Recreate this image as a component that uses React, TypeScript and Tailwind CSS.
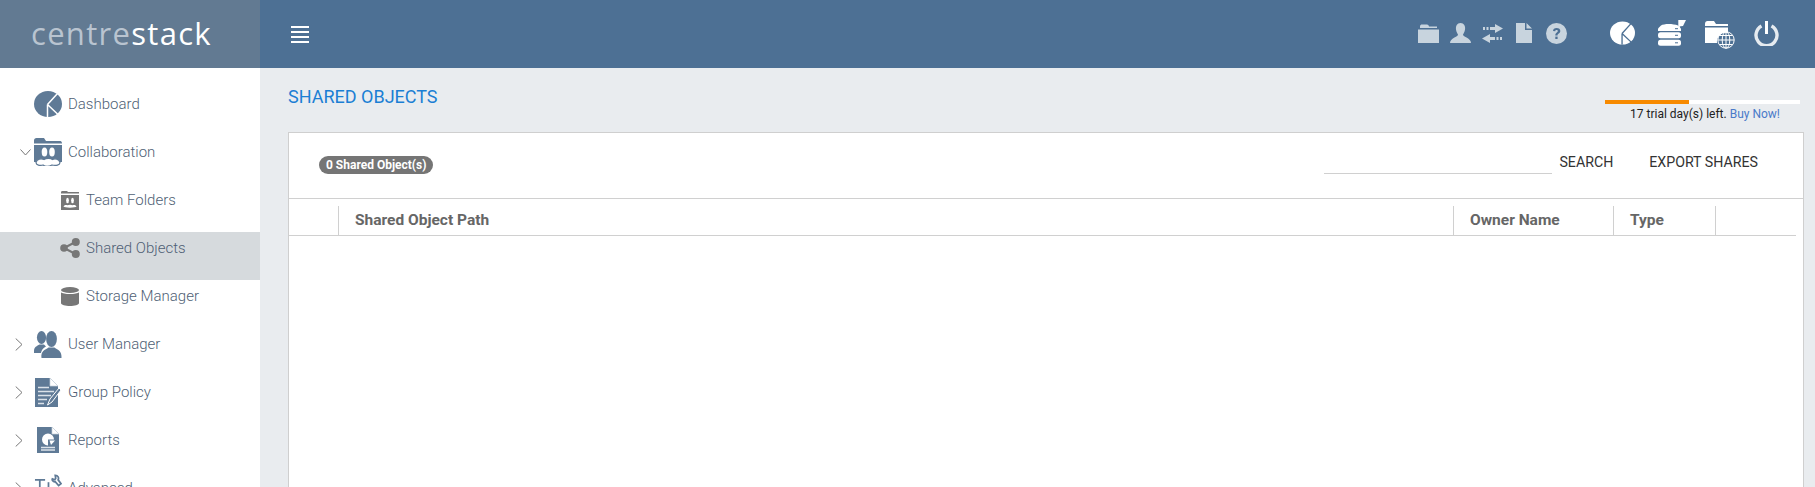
import React from 'react';

const SLATE = '#5f7a96';
const GREY = '#777777';

const PieIcon = ({ color, cut }: { color: string; cut: string }) => (
  <svg viewBox="0 0 28 26" className="w-full h-full">
    <ellipse cx="14" cy="13" rx="14" ry="13" fill={color} />
    <path d="M13.5 13.5L23.5 2.5M13.5 13.5V26M13.5 13.5L24 23.5" stroke={cut} strokeWidth="1.5" fill="none" />
  </svg>
);

const PeopleFolder = ({ color }: { color: string }) => (
  <svg viewBox="0 0 28 28" className="w-[28px] h-[28px]">
    <path d="M0 4V2.5C0 1 1 0 2.5 0H10L12 3H25.5C27 3 28 3.5 28 5.5H0Z" fill={color} />
    <rect x="0" y="7" width="28" height="17" fill={color} />
    <ellipse cx="10.5" cy="14" rx="2.8" ry="4.6" fill="#fff" />
    <ellipse cx="18" cy="14" rx="2.8" ry="4.6" fill="#fff" />
    <path d="M2 24.5C3 21 7 20 10 21.5C12 20 17 20 18.5 21.5C21 20 25 21 26 24.5C26 27 22 28 18 27C15 28.5 11 28.5 9 27C6 28 2 27 2 24.5Z" fill="#fff" stroke={color} strokeWidth="1.2" />
  </svg>
);

const TeamFolder = () => (
  <svg viewBox="0 0 18 19" className="w-[18px] h-[19px]">
    <path d="M0 1.5C0 .5.5 0 1.5 0H6L7 1H18V2.5H0Z" fill={GREY} />
    <rect y="4" width="18" height="15" fill={GREY} />
    <ellipse cx="6.5" cy="9.5" rx="1.4" ry="2.8" fill="#fff" />
    <ellipse cx="11.5" cy="9.5" rx="1.4" ry="2.8" fill="#fff" />
    <path d="M2.5 15.5C3 14 5 13.5 6.5 14.3C8 13.5 10 13.5 11.5 14.3C13 13.5 15 14 15.5 15.5C15 17 3 17 2.5 15.5Z" fill="#fff" />
  </svg>
);

const ShareIcon = () => (
  <svg viewBox="0 0 20 20" className="w-5 h-5">
    <path d="M4 10L15.5 4M4 10L15.5 16" stroke={GREY} strokeWidth="2" fill="none" />
    <circle cx="4" cy="10" r="3.8" fill={GREY} />
    <circle cx="15.8" cy="4" r="4" fill={GREY} />
    <circle cx="15.8" cy="16" r="4" fill={GREY} />
  </svg>
);

const StorageIcon = () => (
  <svg viewBox="0 0 18 19" className="w-[18px] h-[19px]">
    <ellipse cx="9" cy="3" rx="9" ry="3" fill={GREY} />
    <path d="M0 5.2C2 7.6 16 7.6 18 5.2V16C18 20 0 20 0 16Z" fill={GREY} />
  </svg>
);

const UsersIcon = () => (
  <svg viewBox="0 0 28 27" className="w-[28px] h-[27px]">
    <ellipse cx="7.5" cy="6.5" rx="4.6" ry="6.5" fill={SLATE} />
    <path d="M0 20C0 16 3 15 5.5 13.5H10L12 15.5C9 17 7.5 19 7 22H0Z" fill={SLATE} />
    <ellipse cx="17.5" cy="8" rx="5.4" ry="8" fill={SLATE} />
    <path d="M7.5 27C6.5 20 11 19 14.5 16.5H20.5C24 19 28 20 27.5 27Z" fill={SLATE} />
  </svg>
);

const PolicyIcon = () => (
  <svg viewBox="0 0 26 29" className="w-[26px] h-[29px]">
    <path d="M0 0H15L23 8V29H0Z" fill={SLATE} />
    <path d="M15 0L23 8H15Z" fill="#fff" stroke="#c8d2dc" strokeWidth=".7" />
    <path d="M3 9.5H14M3 13.5H19M3 17.5H16M3 21.5H12M3 25.5H9" stroke="#dbe2e9" strokeWidth="1.5" />
    <path d="M12.5 27L15 21L24 10L26 12L17 24Z" fill={SLATE} stroke="#fff" strokeWidth="1" />
  </svg>
);

const ReportIcon = () => (
  <svg viewBox="0 0 22 26" className="w-[22px] h-[26px]">
    <path d="M0 0H15L22 7V26H0Z" fill={SLATE} />
    <path d="M15 0L22 7H15Z" fill="#fff" stroke="#c8d2dc" strokeWidth=".7" />
    <path d="M11 6.5A6 6 0 1 0 11 18.5V12.5H17A6 6 0 0 0 11 6.5Z" fill="#fff" />
    <path d="M12.5 13.5H18L14 18Z" fill="#fff" />
    <path d="M4 20.5H18M4 23H18" stroke="#dbe2e9" strokeWidth="1.3" />
  </svg>
);

const ToolsIcon = () => (
  <svg viewBox="0 0 29 28" className="w-[29px] h-[28px]">
    <path d="M1 5.5H11.5M6 5.5V20" stroke={SLATE} strokeWidth="1.8" fill="none" />
    <path d="M15 8V20" stroke={SLATE} strokeWidth="1.8" fill="none" />
    <path d="M22 1C25 1 26 3.5 25 5.5L28 9.5L25.5 11.5L22 7.5C19.5 8 18.5 5.5 19 4.5L21.5 5.5L22.5 4Z" fill="none" stroke={SLATE} strokeWidth="1.8" />
  </svg>
);

const Chevron = ({ open }: { open?: boolean }) =>
  open ? (
    <svg viewBox="0 0 11 7" className="w-[11px] h-[7px]">
      <path d="M0.5 0.5L5.5 6L10.5 0.5" fill="none" stroke="#777" strokeWidth="1" />
    </svg>
  ) : (
    <svg viewBox="0 0 8 13" className="w-2 h-[13px]">
      <path d="M0.7 0.5L7 6.5L0.7 12.5" fill="none" stroke="#777" strokeWidth="1" />
    </svg>
  );

type NavItem = {
  label: string;
  icon: React.ReactNode;
  caret?: 'open' | 'closed';
  sub?: boolean;
  active?: boolean;
};

const items: NavItem[] = [
  { label: 'Dashboard', icon: <div className="w-[28px] h-[26px]"><PieIcon color={SLATE} cut="#fff" /></div> },
  { label: 'Collaboration', icon: <PeopleFolder color={SLATE} />, caret: 'open' },
  { label: 'Team Folders', icon: <TeamFolder />, sub: true },
  { label: 'Shared Objects', icon: <ShareIcon />, sub: true, active: true },
  { label: 'Storage Manager', icon: <StorageIcon />, sub: true },
  { label: 'User Manager', icon: <UsersIcon />, caret: 'closed' },
  { label: 'Group Policy', icon: <PolicyIcon />, caret: 'closed' },
  { label: 'Reports', icon: <ReportIcon />, caret: 'closed' },
  { label: 'Advanced', icon: <ToolsIcon />, caret: 'closed' },
];

const NavRow = ({ item }: { item: NavItem }) => (
  <div className={`h-12 shrink-0 flex items-start ${item.active ? 'bg-[#d6dadd]' : ''}`}>
    <div className="h-8 flex items-center w-[34px] shrink-0 pl-[15px]">
      {item.caret === 'open' && <div className="ml-[5px] mt-[1px] flex"><Chevron open /></div>}
      {item.caret === 'closed' && <Chevron />}
    </div>
    <div className={`h-8 flex items-center justify-center shrink-0 w-[28px] ${item.sub ? 'ml-[22px]' : ''}`}>{item.icon}</div>
    <span className={`h-8 leading-8 text-[15px] font-light whitespace-nowrap ${item.sub ? 'ml-[2px]' : 'ml-[6px]'} text-[#4f5f75]`}>{item.label}</span>
  </div>
);

const Column = ({ label, width, grow, divider = true }: { label?: string; width?: string; grow?: boolean; divider?: boolean }) => (
  <div className={`h-[29px] pt-px flex items-center pl-4 text-[15.5px] font-bold text-[#666666] ${divider ? 'border-l border-[#d0d0d0]' : ''} ${grow ? 'flex-1' : ''} ${width ?? ''}`}>
    {label}
  </div>
);

const App = () => {
  return (
    <div className="w-[1815px] h-[487px] overflow-hidden flex flex-col font-['Roboto',sans-serif]">
      <header className="h-[68px] shrink-0 flex bg-[#4d7094]">
        <div className="w-[260px] shrink-0 bg-[#627a92] flex items-center pl-[31px]">
          <span className="text-[31px] font-['Open_Sans',sans-serif] font-normal text-white tracking-[1.3px] leading-none mt-[-1px]">
            <span className="text-[#b9c4d0]">centre</span>stack
          </span>
        </div>
        <div className="flex-1 flex items-center pl-[31px] pr-[36px]">
          <div className="w-[18px] h-[17px] flex flex-col justify-between">
            <div className="h-0.5 bg-white" />
            <div className="h-0.5 bg-white" />
            <div className="h-0.5 bg-white" />
            <div className="h-0.5 bg-white" />
          </div>
          <div className="ml-auto flex items-center gap-[11px] mt-[-2px]">
            <svg viewBox="0 0 21 19" className="w-[21px] h-[19px]">
              <path d="M2 2.5C2 1 3 .5 4 .5H9C10 .5 11 1.5 11 2.5H19V4H2Z" fill="#c8d4de" />
              <path d="M0 5.5H21V19H0Z" fill="#c8d4de" />
            </svg>
            <svg viewBox="0 0 21 20" className="w-[21px] h-5">
              <path d="M10.5 0C14 0 15.5 3 15 6.5C14.7 9 13.5 10.5 13 11.5C13 14 21 15 21 20H0C0 15 8 14 8 11.5C7.5 10.5 6.3 9 6 6.5C5.5 3 7 0 10.5 0Z" fill="#c8d4de" />
            </svg>
            <svg viewBox="0 0 21 19" className="w-[21px] h-[19px]">
              <path d="M13 0L21 4.5L13 9V6H8V3H13ZM1 3H3V6H1ZM4.5 3H6.5V6H4.5Z" fill="#c8d4de" />
              <path d="M8 10V13H13V16H8V19L0 14.5ZM14.5 13H16.5V16H14.5ZM18 13H20V16H18Z" fill="#c8d4de" />
            </svg>
            <svg viewBox="0 0 16 20" className="w-4 h-5 ml-[2px]">
              <path d="M0 0H9V7H16V20H0ZM10.5 0L16 5.5H10.5Z" fill="#c8d4de" />
            </svg>
            <svg viewBox="0 0 21 21" className="w-[21px] h-[21px] ml-[3px]">
              <circle cx="10.5" cy="10.5" r="10.5" fill="#c8d4de" />
              <path d="M7 8C7 6 8.5 5 10.5 5C13 5 14.3 6.3 14.3 8C14.3 10.5 11.5 10.5 11.5 12.5H9.3C9.3 9.5 11.8 9.5 11.8 8C11.8 7.3 11.3 7 10.5 7C9.7 7 9.3 7.4 9.3 8.2Z" fill="#4d7094" />
              <rect x="9.3" y="13.6" width="2.3" height="2.4" fill="#4d7094" />
            </svg>
            <div className="w-[25px] h-[24px] ml-[32px]"><PieIcon color="#ffffff" cut="#4d7094" /></div>
            <svg viewBox="0 0 28 26" className="w-[28px] h-[26px] ml-[12px]">
              <path d="M3 5.5C6 3.5 15 3.5 20 5.5L23 8.5V11H0V8.5Z" fill="#fff" />
              <rect x="0" y="12.3" width="23" height="6" rx="2.5" fill="#fff" />
              <rect x="0" y="19.8" width="23" height="6" rx="2.5" fill="#fff" />
              <path d="M21 0V8" stroke="#fff" strokeWidth="1.4" />
              <path d="M21 0H28L25 6L21 6.5Z" fill="#fff" />
              <path d="M17 8.7H20M17 15.3H20M17 22.8H20" stroke="#4d7094" strokeWidth="1" />
            </svg>
            <svg viewBox="0 0 30 28" className="w-[30px] h-[28px] ml-[8px] mt-[4px]">
              <path d="M0 3C0 1 1 0 2.5 0H9L11 3H23V5H0ZM0 6.5H23V12A9 9 0 0 0 12 22H0Z" fill="#fff" />
              <circle cx="21" cy="19" r="8.2" fill="none" stroke="#fff" strokeWidth="1" />
              <ellipse cx="21" cy="19" rx="3.8" ry="8.2" fill="none" stroke="#fff" strokeWidth="1" />
              <path d="M13 19H29M14.5 14.5H27.5M14.5 23.5H27.5M21 11V27" stroke="#fff" strokeWidth="1" />
            </svg>
            <svg viewBox="0 0 25 25" className="w-[25px] h-[25px] ml-[8px]">
              <path d="M7.5 5A10.5 10.5 0 1 0 17.5 5" fill="none" stroke="#e6ebf0" strokeWidth="3.4" />
              <rect x="11" y="0" width="3" height="13" fill="#fff" />
            </svg>
          </div>
        </div>
      </header>

      <div className="flex-1 flex min-h-0">
        <aside className="w-[260px] shrink-0 bg-white pt-5 flex flex-col overflow-hidden">
          {items.map((item) => (
            <NavRow key={item.label} item={item} />
          ))}
        </aside>

        <main className="flex-1 min-w-0 bg-[#e9ecef] pl-[28px] pr-[11px] flex flex-col">
          <div className="h-[64px] shrink-0 flex justify-between">
            <h1 className="mt-[18px] text-lg leading-[22px] font-normal text-[#1b7fd4]">SHARED OBJECTS</h1>
            <div className="w-[195px] mt-8 mr-[4px] flex flex-col items-center">
              <div className="w-full h-1 bg-white">
                <div className="w-[84px] h-1 bg-[#f78a00]" />
              </div>
              <p className="mt-[2px] ml-[5px] text-xs leading-4 font-normal text-[#222222]">
                17 trial day(s) left. <span className="text-[#4a7ac9]">Buy Now!</span>
              </p>
            </div>
          </div>

          <section className="flex-1 bg-white border border-[#cfcfcf] border-b-0">
            <div className="h-[66px] flex items-start border-b border-[#d0d0d0]">
              <span className="ml-[30px] mt-[23px] h-[18px] leading-[18px] px-[7px] rounded-full bg-[#757575] text-white text-xs font-bold">
                0 Shared Object(s)
              </span>
              <div className="ml-auto w-[228px] h-[41px] border-b border-[#d0d0d0]" />
              <span className="ml-[7px] mt-[20px] text-[14.2px] leading-[18px] text-[#333333]">SEARCH</span>
              <span className="ml-[36px] mr-[45px] mt-[20px] text-[14.2px] leading-[18px] text-[#333333]">EXPORT SHARES</span>
            </div>
            <div className="mr-[7px] pt-[7px] flex border-b border-[#d0d0d0]">
              <Column width="w-[49px]" divider={false} />
              <Column label="Shared Object Path" grow />
              <Column label="Owner Name" width="w-[160px]" />
              <Column label="Type" width="w-[102px]" />
              <Column width="w-[81px]" />
            </div>
          </section>
        </main>
      </div>
    </div>
  );
};

export default App;
